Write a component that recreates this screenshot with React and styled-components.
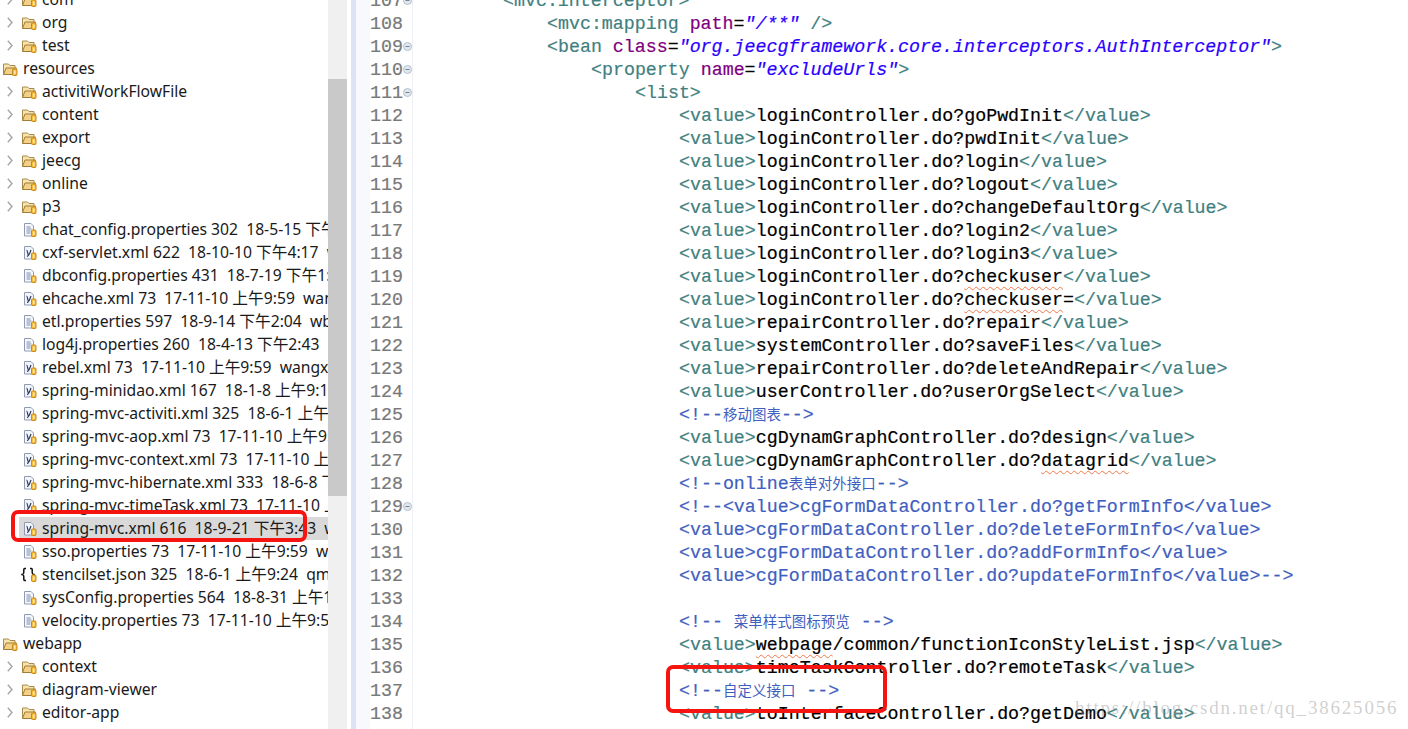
import styled, { createGlobalStyle, css } from 'styled-components';

const GlobalStyle = createGlobalStyle`
  html, body {
    margin: 0;
    padding: 0;
    background: #fff;
  }
`
const Page = styled.div`
  position: relative;
  display: flex;
  width: 1408px;
  height: 729px;
  overflow: hidden;
  background: #fff;
`

/* left package tree */
const Tree = styled.div`
  width: 328px;
  flex-shrink: 0;
  overflow: hidden;
`
const TreeList = styled.div`
  margin-top: -12px;
`
const TreeRow = styled.div`
  display: flex;
  height: 23px;
`
const Indent = styled.div`
  display: flex;
  align-items: center;
  flex-shrink: 0;
  width: ${p => p.$level * 19}px;
  padding-left: ${p => p.$level * 7}px;
  box-sizing: border-box;
`
const RowBody = styled.div`
  display: flex;
  align-items: center;
  flex: 1;
  min-width: 0;
  padding-left: 3px;
  gap: 4px;
  background: ${p => (p.$selected ? '#d9d9d9' : 'transparent')};

  svg {
    flex-shrink: 0;
    overflow: visible;
  }
`
const RowLabel = styled.span`
  padding-bottom: 2px;
  font-family: "Noto Sans", "Noto Sans CJK SC", sans-serif;
  font-size: 15.7px;
  color: #1a1a1a;
  white-space: pre;
`
const Scrollbar = styled.div`
  width: 19px;
  flex-shrink: 0;
  padding-top: 79px;
  background: #f0f0f0;
`
const Thumb = styled.div`
  height: 417px;
  background: #c9c9c9;
`
const Sash = styled.div`
  width: 4px;
  flex-shrink: 0;
`

/* right xml editor */
const Ruler = styled.div`
  width: 5px;
  flex-shrink: 0;
  background: #dde3f4;
`
const AnnotationBar = styled.div`
  width: 14px;
  flex-shrink: 0;
  background: #f8f9fc;
`
const Editor = styled.div`
  flex: 1;
  min-width: 0;
  margin-top: -10px;
`
const CodeRow = styled.div`
  display: flex;
  height: 23px;
  line-height: 23px;
  font-family: "Liberation Mono", monospace;
  font-size: 18.3px;
  white-space: pre;
  -webkit-text-stroke: 0.2px;
`
const LineMargin = styled.div`
  display: flex;
  align-items: center;
  justify-content: space-between;
  width: 43px;
  flex-shrink: 0;
  box-sizing: border-box;
  border-right: 1px solid #eef0f6;
  color: #787878;

  svg {
    flex-shrink: 0;
    margin-top: -3px;
  }
`
const CodeText = styled.div`
  padding-left: ${p => 90 + p.$indent * 44}px;
`
const tokenColors = {
  tag: '#3f7f7f',
  attr: '#7f007f',
  str: '#2a00ff',
  text: '#000',
  comment: '#3f5fbf',
}
const Token = styled.span`
  color: ${p => tokenColors[p.$kind]};
  ${p => p.$kind === 'str' && css`font-style: italic;`}
  ${p => p.$squiggle && css`
    text-decoration: underline wavy #f0784a 1px;
    text-underline-offset: 4px;
  `}
`
const Cjk = styled.span`
  font-family: "Noto Sans CJK SC", sans-serif;
  font-size: 14.5px;
  line-height: 0;
  color: #3f5fbf;
  -webkit-text-stroke: 0;
`

/* annotations drawn on top of the screenshot */
const markBase = css`
  position: absolute;
  box-sizing: border-box;
  border: 4px solid #f5140f;
  border-radius: 7px;
`
const TreeMark = styled.div`
  ${markBase}
  left: 11px;
  top: 510px;
  width: 296px;
  height: 32px;
`
const CodeMark = styled.div`
  ${markBase}
  left: 666px;
  top: 665px;
  width: 221px;
  height: 48px;
`
const Watermark = styled.div`
  position: absolute;
  left: 1075px;
  top: 697px;
  font-family: "Liberation Serif", serif;
  font-size: 19px;
  letter-spacing: 1.8px;
  color: rgba(140, 140, 140, 0.42);
  white-space: pre;
`

const Chevron = () => (
  <svg width="6" height="11" viewBox="0 0 6 11" fill="none">
    <path d="M.8.8 5 5.5.8 10.2" stroke="#a6a6a6" strokeWidth="1.4" />
  </svg>
)

// the little jar eclipse puts on shared files
const Jar = () => (
  <g>
    <rect x="9.5" y="8" width="4.5" height="6.5" rx="1" fill="#f6b93a" stroke="#c98a16" />
    <rect x="11" y="9.5" width="1.5" height="3.5" fill="#fff" opacity=".7" />
  </g>
)

const FolderIcon = () => (
  <svg width="16" height="16" viewBox="0 0 16 16" fill="none">
    <path d="M.5 13.5V3h5l1.5 1.5h5V7" fill="#f7e3ae" stroke="#a98a4d" />
    <path d="M.5 13.5 3 7h10.5l-3 6.5z" fill="#f2d085" stroke="#a17c37" />
    <Jar />
  </svg>
)

const PropsIcon = () => (
  <svg width="16" height="16" viewBox="0 0 16 16" fill="none">
    <path d="M2.5 1.5h6.5l2.5 2.5v10h-9z" fill="#f5f7fb" stroke="#8f9bb3" />
    <path d="M4.5 5h4M4.5 7h5M4.5 9h4M4.5 11h4" stroke="#7d8cab" />
    <Jar />
  </svg>
)

const XmlIcon = () => (
  <svg width="16" height="16" viewBox="0 0 16 16" fill="none">
    <path d="M2.5 1.5h6.5l2.5 2.5v10h-9z" fill="#f2f4f9" stroke="#8f9bb3" />
    <path d="M4.5 5c1.2 0 1 5 2 5M9 5c-1 2.5-2 6-4 6.5" stroke="#2c3a5c" strokeWidth="1.2" />
    <Jar />
  </svg>
)

const JsonIcon = () => (
  <svg width="16" height="16" viewBox="0 0 16 16" fill="none">
    <path d="M4 1.500H2.800C1.500 1.500 1.800 3 1.800 5S1.500 7.500-.8 7.500C1.500 7.500 1.800 8 1.800 10S1.500 13.500 2.800 13.500H4" stroke="#111" strokeWidth="1.5" />
    <path d="M8 1.500h1.200C10.500 1.500 10.200 3 10.200 5S10.500 7.500 12.800 7.500" stroke="#111" strokeWidth="1.5" />
    <Jar />
  </svg>
)

const FoldIcon = () => (
  <svg width="9" height="9" viewBox="0 0 9 9" fill="none">
    <circle cx="4.500" cy="4.500" r="4" fill="#e2e7ee" stroke="#b4c0cc" />
    <path d="M2.500 4.500h4" stroke="#6f8296" />
  </svg>
)

const icons = { folder: FolderIcon, props: PropsIcon, xml: XmlIcon, json: JsonIcon }

const treeItems = [
  { level: 1, icon: 'folder', arrow: true, label: 'com' },
  { level: 1, icon: 'folder', arrow: true, label: 'org' },
  { level: 1, icon: 'folder', arrow: true, label: 'test' },
  { level: 0, icon: 'folder', label: 'resources' },
  { level: 1, icon: 'folder', arrow: true, label: 'activitiWorkFlowFile' },
  { level: 1, icon: 'folder', arrow: true, label: 'content' },
  { level: 1, icon: 'folder', arrow: true, label: 'export' },
  { level: 1, icon: 'folder', arrow: true, label: 'jeecg' },
  { level: 1, icon: 'folder', arrow: true, label: 'online' },
  { level: 1, icon: 'folder', arrow: true, label: 'p3' },
  { level: 1, icon: 'props', label: 'chat_config.properties 302  18-5-15 下午4:17' },
  { level: 1, icon: 'xml', label: 'cxf-servlet.xml 622  18-10-10 下午4:17  wb' },
  { level: 1, icon: 'props', label: 'dbconfig.properties 431  18-7-19 下午1:20' },
  { level: 1, icon: 'xml', label: 'ehcache.xml 73  17-11-10 上午9:59  wangxing' },
  { level: 1, icon: 'props', label: 'etl.properties 597  18-9-14 下午2:04  wb' },
  { level: 1, icon: 'props', label: 'log4j.properties 260  18-4-13 下午2:43' },
  { level: 1, icon: 'xml', label: 'rebel.xml 73  17-11-10 上午9:59  wangxing' },
  { level: 1, icon: 'xml', label: 'spring-minidao.xml 167  18-1-8 上午9:15' },
  { level: 1, icon: 'xml', label: 'spring-mvc-activiti.xml 325  18-6-1 上午9:24' },
  { level: 1, icon: 'xml', label: 'spring-mvc-aop.xml 73  17-11-10 上午9:59' },
  { level: 1, icon: 'xml', label: 'spring-mvc-context.xml 73  17-11-10 上午9:59' },
  { level: 1, icon: 'xml', label: 'spring-mvc-hibernate.xml 333  18-6-8 下午' },
  { level: 1, icon: 'xml', label: 'spring-mvc-timeTask.xml 73  17-11-10 上午' },
  { level: 1, icon: 'xml', label: 'spring-mvc.xml 616  18-9-21 下午3:43  wb', selected: true },
  { level: 1, icon: 'props', label: 'sso.properties 73  17-11-10 上午9:59  wb' },
  { level: 1, icon: 'json', label: 'stencilset.json 325  18-6-1 上午9:24  qm' },
  { level: 1, icon: 'props', label: 'sysConfig.properties 564  18-8-31 上午10:11' },
  { level: 1, icon: 'props', label: 'velocity.properties 73  17-11-10 上午9:59' },
  { level: 0, icon: 'folder', label: 'webapp' },
  { level: 1, icon: 'folder', arrow: true, label: 'context' },
  { level: 1, icon: 'folder', arrow: true, label: 'diagram-viewer' },
  { level: 1, icon: 'folder', arrow: true, label: 'editor-app' },
]

const value = (body, squiggle) => [
  ['tag', '<value>'],
  ...(squiggle ? [['text', body], ['text', squiggle, true]] : [['text', body]]),
  ['tag', '</value>'],
]
const comment = (...parts) => parts.map(p => ['comment', p])

const codeLines = [
  { indent: 0, fold: true, parts: [['tag', '<mvc:interceptor>']] },
  { indent: 1, parts: [['tag', '<mvc:mapping '], ['attr', 'path'], ['text', '='], ['str', '"/**"'], ['tag', ' />']] },
  { indent: 1, fold: true, parts: [['tag', '<bean '], ['attr', 'class'], ['text', '='], ['str', '"org.jeecgframework.core.interceptors.AuthInterceptor"'], ['tag', '>']] },
  { indent: 2, fold: true, parts: [['tag', '<property '], ['attr', 'name'], ['text', '='], ['str', '"excludeUrls"'], ['tag', '>']] },
  { indent: 3, fold: true, parts: [['tag', '<list>']] },
  { indent: 4, parts: value('loginController.do?goPwdInit') },
  { indent: 4, parts: value('loginController.do?pwdInit') },
  { indent: 4, parts: value('loginController.do?login') },
  { indent: 4, parts: value('loginController.do?logout') },
  { indent: 4, parts: value('loginController.do?changeDefaultOrg') },
  { indent: 4, parts: value('loginController.do?login2') },
  { indent: 4, parts: value('loginController.do?login3') },
  { indent: 4, parts: value('loginController.do?', 'checkuser') },
  { indent: 4, parts: [['tag', '<value>'], ['text', 'loginController.do?'], ['text', 'checkuser', true], ['text', '='], ['tag', '</value>']] },
  { indent: 4, parts: value('repairController.do?repair') },
  { indent: 4, parts: value('systemController.do?saveFiles') },
  { indent: 4, parts: value('repairController.do?deleteAndRepair') },
  { indent: 4, parts: value('userController.do?userOrgSelect') },
  { indent: 4, parts: comment('<!--', '移动图表', '-->') },
  { indent: 4, parts: value('cgDynamGraphController.do?design') },
  { indent: 4, parts: value('cgDynamGraphController.do?', 'datagrid') },
  { indent: 4, parts: comment('<!--online', '表单对外接口', '-->') },
  { indent: 4, fold: true, parts: comment('<!--<value>cgFormDataController.do?getFormInfo</value>') },
  { indent: 4, parts: comment('<value>cgFormDataController.do?deleteFormInfo</value>') },
  { indent: 4, parts: comment('<value>cgFormDataController.do?addFormInfo</value>') },
  { indent: 4, parts: comment('<value>cgFormDataController.do?updateFormInfo</value>-->') },
  { indent: 4, parts: [] },
  { indent: 4, parts: comment('<!-- ', '菜单样式图标预览', ' -->') },
  { indent: 4, parts: [['tag', '<value>'], ['text', 'webpage', true], ['text', '/common/functionIconStyleList.jsp'], ['tag', '</value>']] },
  { indent: 4, parts: value('timeTaskController.do?remoteTask') },
  { indent: 4, parts: comment('<!--', '自定义接口', ' -->') },
  { indent: 4, parts: value('toInterfaceController.do?getDemo') },
  { indent: 3, parts: [['tag', '</list>']] },
]

const hasCjk = text => /[\u4e00-\u9fff]/.test(text)

const CodeLine = ({ number, line }) => (
  <CodeRow>
    <LineMargin>
      {number}
      {line.fold && <FoldIcon />}
    </LineMargin>
    <CodeText $indent={line.indent}>
      {line.parts.map(([kind, text, squiggle], i) =>
        hasCjk(text)
          ? <Cjk key={i}>{text}</Cjk>
          : <Token key={i} $kind={kind} $squiggle={squiggle}>{text}</Token>
      )}
    </CodeText>
  </CodeRow>
)

const App = () => {
  return (
    <Page>
      <GlobalStyle />
      <Tree>
        <TreeList>
          {treeItems.map(item => {
            const Icon = icons[item.icon]
            return (
              <TreeRow key={item.label}>
                <Indent $level={item.level}>{item.arrow && <Chevron />}</Indent>
                <RowBody $selected={item.selected}>
                  <Icon />
                  <RowLabel>{item.label}</RowLabel>
                </RowBody>
              </TreeRow>
            )
          })}
        </TreeList>
      </Tree>
      <Scrollbar><Thumb /></Scrollbar>
      <Sash />
      <Ruler />
      <AnnotationBar />
      <Editor>
        {codeLines.map((line, i) => (
          <CodeLine key={i} number={107 + i} line={line} />
        ))}
      </Editor>
      <TreeMark />
      <CodeMark />
      <Watermark>https://blog.csdn.net/qq_38625056</Watermark>
    </Page>
  )
};

export default App;
